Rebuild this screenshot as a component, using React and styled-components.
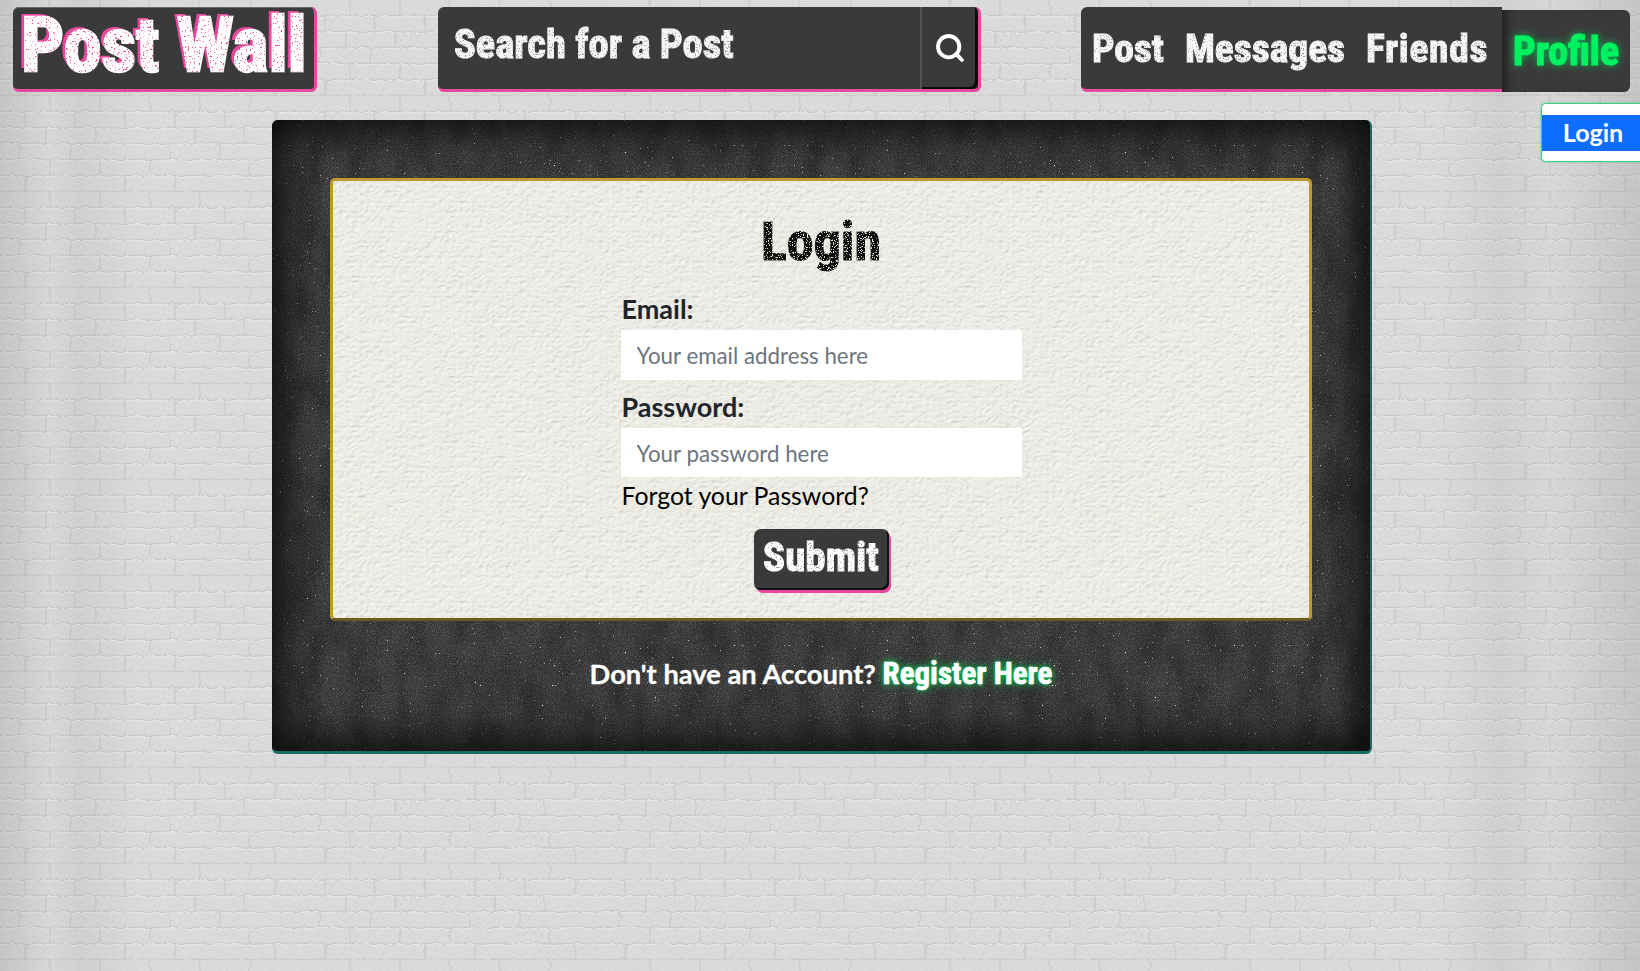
import React from "react";
import styled, { createGlobalStyle } from "styled-components";
import { FiSearch } from "react-icons/fi";

const svgUrl = (svg) => `url("data:image/svg+xml,${encodeURIComponent(svg)}")`;

const brick = svgUrl(`<svg xmlns='http://www.w3.org/2000/svg' width='300' height='96'>
<filter id='w' x='0' y='0' width='100%' height='100%'><feTurbulence type='fractalNoise' baseFrequency='.12' numOctaves='3' stitchTiles='stitch' result='t'/>
<feDisplacementMap in='SourceGraphic' in2='t' scale='5'/></filter>
<filter id='g' x='0' y='0' width='100%' height='100%'><feTurbulence type='fractalNoise' baseFrequency='.5' numOctaves='2' stitchTiles='stitch'/>
<feColorMatrix values='0 0 0 0 .5 0 0 0 0 .5 0 0 0 0 .5 0 0 0 .5 -.17'/></filter>
<rect width='300' height='96' filter='url(#g)'/>
<g filter='url(#w)' fill='none'>
<path stroke='#cbcbcb' stroke-width='1.4' d='M0 15.5H300M0 31.5H300M0 47.5H300M0 63.5H300M0 79.5H300M0 95.5H300'/>
<path stroke='#e9e9e9' stroke-width='1' d='M0 16.7H300M0 32.7H300M0 48.7H300M0 64.7H300M0 80.7H300'/>
<path stroke='#cbcbcb' stroke-width='1.4' d='M50 0V15M100 0V15M150 0V15M200 0V15M250 0V15M25 16V31M75 16V31M125 16V31M175 16V31M225 16V31M275 16V31M45 32V47M95 32V47M195 32V47M245 32V47M20 48V63M70 48V63M170 48V63M220 48V63M50 64V79M100 64V79M150 64V79M250 64V79M25 80V95M125 80V95M175 80V95M275 80V95'/>
</g></svg>`);

const chalk = svgUrl(`<svg xmlns='http://www.w3.org/2000/svg' width='500' height='500'>
<filter id='n' x='0' y='0' width='100%' height='100%'><feTurbulence type='fractalNoise' baseFrequency='.9' numOctaves='2' stitchTiles='stitch'/>
<feColorMatrix values='0 0 0 0 1 0 0 0 0 1 0 0 0 0 1 0 0 0 .5 -.2'/></filter>
<filter id='s' x='0' y='0' width='100%' height='100%'><feTurbulence type='fractalNoise' baseFrequency='.6' numOctaves='2' seed='4' stitchTiles='stitch'/>
<feColorMatrix values='0 0 0 0 1 0 0 0 0 1 0 0 0 0 1 0 0 0 9 -6.9'/></filter>
<filter id='b' x='0' y='0' width='100%' height='100%'><feTurbulence type='fractalNoise' baseFrequency='.04 .02' numOctaves='3' stitchTiles='stitch'/>
<feColorMatrix values='0 0 0 0 0 0 0 0 0 0 0 0 0 0 0 0 0 0 .5 -.16'/></filter>
<rect width='500' height='500' filter='url(#n)'/>
<rect width='500' height='500' filter='url(#b)'/>
<rect width='500' height='500' filter='url(#s)'/></svg>`);

const leather = svgUrl(`<svg xmlns='http://www.w3.org/2000/svg' width='400' height='400'>
<filter id='l' x='0' y='0' width='100%' height='100%'><feTurbulence type='turbulence' baseFrequency='.15 .2' numOctaves='3' stitchTiles='stitch'/>
<feDiffuseLighting surfaceScale='.8' diffuseConstant='1.05' lighting-color='#efeee7'><feDistantLight azimuth='60' elevation='68'/></feDiffuseLighting></filter>
<rect width='400' height='400' filter='url(#l)'/></svg>`);

const GlobalStyle = createGlobalStyle`
  html, body {
    margin: 0;
    height: 100%;
  }
  body {
    font-family: "Lato", "Open Sans", sans-serif;
    background-color: #dddddd;
    background-image:
      linear-gradient(90deg,
        rgba(110,110,110,.2),
        rgba(110,110,110,.03) 50px,
        rgba(110,110,110,.1) 80px,
        rgba(110,110,110,0) 140px,
        rgba(110,110,110,0) 1440px,
        rgba(110,110,110,.1) 1500px,
        rgba(110,110,110,.03) 1550px,
        rgba(110,110,110,.2)),
      ${brick};
    overflow: hidden;
  }
`;

const display = `
  font-family: "Liberation Sans Narrow", "Roboto Condensed", "Liberation Sans", sans-serif;
  font-weight: 700;
`;

// speckled print effect, applied to real text through css filters
const Speckle = ({ id, color, freq, cut }) => (
  <filter id={id} x="-5%" y="-5%" width="110%" height="110%">
    <feTurbulence type="fractalNoise" baseFrequency={freq} numOctaves="2" seed="7" />
    <feColorMatrix values={`0 0 0 0 0 0 0 0 0 0 0 0 0 0 0 0 0 0 12 ${cut}`} result="holes" />
    <feFlood floodColor={color} />
    <feComposite in2="holes" operator="in" />
    <feComposite in2="SourceAlpha" operator="in" result="dots" />
    <feMerge>
      <feMergeNode in="SourceGraphic" />
      <feMergeNode in="dots" />
    </feMerge>
  </filter>
);

const FilterDefs = styled.svg`
  position: absolute;
  width: 0;
  height: 0;
`;

const Header = styled.header`
  display: flex;
  align-items: flex-start;
  padding: 7px 10px 0 13px;
  height: 120px;
  box-sizing: border-box;
`;

const Logo = styled.a`
  ${display}
  display: block;
  box-sizing: border-box;
  width: 304px;
  height: 85px;
  padding-left: 8px;
  background: #3a3a3a;
  border-radius: 6px;
  border-right: 3px solid #e8489f;
  border-bottom: 3px solid #e8489f;
  box-shadow: inset 0 1px 0 #6a6a6a;
  font-size: 76px;
  line-height: 76px;
  white-space: nowrap;
`;

const LogoText = styled.span`
  display: inline-block;
  color: #fff;
  -webkit-text-stroke: 2.5px #fff;
  text-shadow: -4px -3px 0 #e8489f;
  filter: url(#speckle-pink);
`;

const SearchForm = styled.form`
  display: flex;
  box-sizing: border-box;
  width: 543px;
  height: 85px;
  margin-left: 121px;
  background: #3a3a3a;
  border-radius: 6px;
  border-bottom: 3px solid #e8489f;
  border-right: 3px solid #e8489f;
`;

const SearchInput = styled.input`
  ${display}
  flex: 1;
  min-width: 0;
  box-sizing: border-box;
  padding: 0 0 8px 16px;
  background: transparent;
  border: 0;
  outline: 0;
  color: #fff;
  font-size: 40.5px;
  -webkit-text-stroke: 1px #f6f6f6;
  filter: url(#speckle-grey);
  &::placeholder {
    color: #f6f6f6;
    opacity: 1;
  }
`;

const SearchButton = styled.button`
  display: flex;
  align-items: center;
  justify-content: center;
  width: 58px;
  padding: 0;
  background: transparent;
  border: 0;
  border-left: 2px solid #555;
  border-radius: 0 6px 6px 0;
  box-shadow: inset -3px -2px 0 #0c0c0c;
  color: #fff;
  font-size: 32px;
  svg {
    stroke-width: 2.9;
  }
`;

const Nav = styled.nav`
  display: flex;
  margin-left: 100px;
`;

const NavLinks = styled.div`
  display: flex;
  gap: 21px;
  box-sizing: border-box;
  width: 421px;
  height: 85px;
  padding: 0 11px;
  align-items: center;
  background: #3a3a3a;
  border-radius: 6px 0 0 6px;
  border-bottom: 3px solid #e8489f;
`;

const NavLink = styled.a`
  ${display}
  color: #f7f7f7;
  font-size: 39.5px;
  letter-spacing: ${(p) => p.$spacing || 0}px;
  -webkit-text-stroke: 1px #f7f7f7;
  filter: url(#speckle-grey);
`;

const ProfileTab = styled.a`
  ${display}
  display: flex;
  align-items: center;
  justify-content: center;
  box-sizing: border-box;
  width: 128px;
  height: 82px;
  margin-top: 3px;
  background: #3a3a3a;
  border-radius: 0 6px 6px 0;
  box-shadow: inset 10px 0 10px -6px #1f1f1f;
  color: #00f260;
  font-size: 40px;
  -webkit-text-stroke: 1px #00f260;
  text-shadow: 0 0 8px #00d45a;
`;

const Dropdown = styled.div`
  position: absolute;
  top: 103px;
  right: 0;
  width: 99px;
  box-sizing: border-box;
  padding: 11px 0 10px;
  background: #fff;
  border: 1px solid #3ecf7f;
  border-right: 0;
  border-radius: 5px 0 0 5px;
  box-shadow: 0 0 3px rgba(62, 207, 127, 0.7);
`;

const DropdownItem = styled.a`
  display: block;
  height: 36px;
  padding-left: 4px;
  background: #0d6efd;
  color: #fff;
  font-size: 25px;
  font-weight: 700;
  line-height: 35px;
  text-align: center;
`;

const Main = styled.main`
  display: flex;
  justify-content: center;
  padding-left: 4px;
`;

const Panel = styled.section`
  box-sizing: border-box;
  width: 1100px;
  height: 634px;
  padding: 58px 58px 0 58px;
  background-color: #353535;
  background-image: ${chalk};
  border-radius: 6px;
  border-right: 2px solid #1a6b62;
  border-bottom: 3px solid #1a6b62;
  box-shadow: inset 0 0 44px 10px #080a0a;
`;

const Card = styled.div`
  box-sizing: border-box;
  height: 443px;
  padding-top: 29px;
  background-color: #eeede6;
  background-image: ${leather};
  border: 3px solid #bd9a2d;
  border-bottom-color: #6d5a1e;
  border-radius: 5px;
  display: flex;
  flex-direction: column;
  align-items: center;
`;

const Title = styled.h1`
  ${display}
  margin: 0;
  color: #111;
  font-size: 54px;
  line-height: 64px;
  -webkit-text-stroke: 1px #111;
  filter: url(#speckle-light);
`;

const Form = styled.form`
  width: 401px;
  margin-top: 18px;
`;

const Label = styled.label`
  display: block;
  margin: 0 0 5px 1px;
  color: #212529;
  font-size: 27px;
  font-weight: 700;
  line-height: 33px;
`;

const Input = styled.input`
  display: block;
  box-sizing: border-box;
  width: 100%;
  height: 49.5px;
  margin-bottom: 10px;
  padding: 2px 16px 0;
  background: #fff;
  border: 0;
  outline: 0;
  color: #212529;
  font-family: inherit;
  font-size: 22.3px;
  &::placeholder {
    color: #6c757d;
  }
`;

const ForgotLink = styled.a`
  display: block;
  margin: -9px 0 0 1px;
  color: #000;
  font-size: 24.8px;
  line-height: 36px;
`;

const SubmitButton = styled.button`
  ${display}
  display: block;
  box-sizing: border-box;
  width: 135px;
  height: 61px;
  margin: 15px auto 0;
  padding: 0 0 5px;
  background: #3a3a3a;
  border: 0;
  border-radius: 7px;
  box-shadow: inset -2px -2px 0 #111, 2px 3px 0 #e8489f;
  color: #fff;
  font-size: 41px;
`;

const SubmitText = styled.span`
  display: inline-block;
  -webkit-text-stroke: 1px #fff;
  filter: url(#speckle-grey);
`;

const RegisterLine = styled.p`
  margin: 33px 0 0;
  color: #fff;
  font-size: 27.3px;
  font-weight: 700;
  line-height: 40px;
  text-align: center;
  -webkit-text-stroke: 0.3px #fff;
`;

const RegisterLink = styled.a`
  ${display}
  color: #fff;
  font-size: 31px;
  -webkit-text-stroke: 0.6px #fff;
  text-shadow: 0 0 8px #00d45a, 0 0 3px #00d45a;
`;

export default function App() {
  return (
    <>
      <GlobalStyle />
      <FilterDefs aria-hidden="true">
        <Speckle id="speckle-pink" color="#e8489f" freq="0.55" cut="-7.6" />
        <Speckle id="speckle-grey" color="#9a9a9a" freq="0.7" cut="-7.4" />
        <Speckle id="speckle-light" color="#e8e8e0" freq="0.8" cut="-7.2" />
      </FilterDefs>
      <Header>
        <Logo>
          <LogoText>Post Wall</LogoText>
        </Logo>
        <SearchForm>
          <SearchInput placeholder="Search for a Post" />
          <SearchButton type="button" aria-label="Search">
            <FiSearch />
          </SearchButton>
        </SearchForm>
        <Nav>
          <NavLinks>
            <NavLink>Post</NavLink>
            <NavLink>Messages</NavLink>
            <NavLink $spacing={0.7}>Friends</NavLink>
          </NavLinks>
          <ProfileTab>Profile</ProfileTab>
        </Nav>
      </Header>
      <Dropdown>
        <DropdownItem>Login</DropdownItem>
      </Dropdown>
      <Main>
        <Panel>
          <Card>
            <Title>Login</Title>
            <Form>
              <Label>Email:</Label>
              <Input type="email" placeholder="Your email address here" />
              <Label>Password:</Label>
              <Input type="password" placeholder="Your password here" />
              <ForgotLink>Forgot your Password?</ForgotLink>
              <SubmitButton type="button">
                <SubmitText>Submit</SubmitText>
              </SubmitButton>
            </Form>
          </Card>
          <RegisterLine>
            Don't have an Account? <RegisterLink>Register Here</RegisterLink>
          </RegisterLine>
        </Panel>
      </Main>
    </>
  );
}
